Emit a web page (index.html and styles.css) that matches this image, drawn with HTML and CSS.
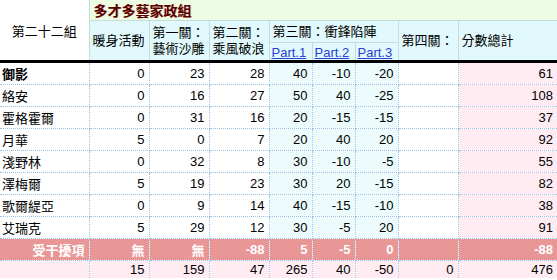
FILE: index.html
```html
<!DOCTYPE html>
<html>
<head>
<meta charset="utf-8">
<link rel="stylesheet" href="styles.css">
</head>
<body>
<table class="score">
  <colgroup>
    <col class="c-name"><col class="c-n"><col class="c-n"><col class="c-n">
    <col class="c-p"><col class="c-p"><col class="c-p"><col class="c-n"><col class="c-total">
  </colgroup>
  <thead>
    <tr class="h1">
      <th class="group" rowspan="3">第二十二組</th>
      <th class="team" colspan="8">多才多藝家政組</th>
    </tr>
    <tr class="h2">
      <th class="hc" rowspan="2">暖身活動</th>
      <th class="hc" rowspan="2">第一關：<br>藝術沙雕</th>
      <th class="hc" rowspan="2">第二關：<br>乘風破浪</th>
      <th class="hc" colspan="3">第三關：衝鋒陷陣</th>
      <th class="hc" rowspan="2">第四關：</th>
      <th class="hc" rowspan="2">分數總計</th>
    </tr>
    <tr class="h3">
      <th class="hc part"><a href="#">Part.1</a></th>
      <th class="hc part"><a href="#">Part.2</a></th>
      <th class="hc part"><a href="#">Part.3</a></th>
    </tr>
  </thead>
  <tbody>
    <tr><td class="name lead">御影</td><td>0</td><td>23</td><td>28</td><td class="cy">40</td><td class="cy">-10</td><td class="cy">-20</td><td></td><td class="pk">61</td></tr>
    <tr><td class="name">絡安</td><td>0</td><td>16</td><td>27</td><td class="cy">50</td><td class="cy">40</td><td class="cy">-25</td><td></td><td class="pk">108</td></tr>
    <tr><td class="name">霍格霍爾</td><td>0</td><td>31</td><td>16</td><td class="cy">20</td><td class="cy">-15</td><td class="cy">-15</td><td></td><td class="pk">37</td></tr>
    <tr><td class="name">月華</td><td>5</td><td>0</td><td>7</td><td class="cy">20</td><td class="cy">40</td><td class="cy">20</td><td></td><td class="pk">92</td></tr>
    <tr><td class="name">淺野林</td><td>0</td><td>32</td><td>8</td><td class="cy">30</td><td class="cy">-10</td><td class="cy">-5</td><td></td><td class="pk">55</td></tr>
    <tr><td class="name">澤梅爾</td><td>5</td><td>19</td><td>23</td><td class="cy">30</td><td class="cy">20</td><td class="cy">-15</td><td></td><td class="pk">82</td></tr>
    <tr><td class="name">歌爾緹亞</td><td>0</td><td>9</td><td>14</td><td class="cy">40</td><td class="cy">-15</td><td class="cy">-10</td><td></td><td class="pk">38</td></tr>
    <tr><td class="name">艾瑞克</td><td>5</td><td>29</td><td>12</td><td class="cy">30</td><td class="cy">-5</td><td class="cy">20</td><td></td><td class="pk">91</td></tr>
    <tr class="penalty"><td>受干擾項</td><td>無</td><td>無</td><td>-88</td><td>5</td><td>-5</td><td>0</td><td></td><td>-88</td></tr>
    <tr class="sum"><td></td><td>15</td><td>159</td><td>47</td><td>265</td><td>40</td><td>-50</td><td>0</td><td>476</td></tr>
  </tbody>
</table>
</body>
</html>
```

FILE: styles.css
```css
html, body {
  margin: 0;
  padding: 0;
  background: #ffffff;
}
.score {
  border-collapse: collapse;
  table-layout: fixed;
  width: 557px;
  font-family: "Liberation Sans", "Noto Sans CJK TC", sans-serif;
  font-size: 13px;
  color: #000;
}
.c-name { width: 89px; }
.c-n { width: 60px; }
.c-p { width: 43px; }
.c-total { width: 99px; }

.score th {
  font-weight: normal;
  text-align: left;
  padding: 0 0 0 3px;
  border: 1px solid #c4dcdc;
  white-space: nowrap;
  overflow: hidden;
}
.h1 th { height: 19px; }
.h2 th.hc { line-height: 16px; }
.h2 { height: 22px; }
.h3 { height: 19px; }
.score th.group {
  background: #ffffff;
  text-align: center;
  padding: 0;
  border-top: none;
  border-left: none;
}
.score th.team {
  background: #effce4;
  font-weight: bold;
  font-size: 14px;
  color: #5a0000;
  text-shadow: 1px 0 0 rgba(200, 0, 0, 0.25);
  padding-left: 4px;
  border-top: none;
  border-right: none;
}
.score th.hc {
  background: #e1f9fc;
  vertical-align: middle;
}
.score th.hc:last-child { border-right: none; }
.score th.part {
  padding: 0 0 0 2px;
  vertical-align: bottom;
}
.part a {
  color: #2a3fd4;
  text-decoration: underline;
  font-size: 13px;
}
thead tr:last-child th { border-bottom: 3px solid #000; }
.h2 th[rowspan="2"] { border-bottom: 3px solid #000; }
.score th.group { border-bottom: 3px solid #000; }

.score td {
  height: 21px;
  padding: 0 4px 0 2px;
  text-align: right;
  border: 1px dotted #9cc0e4;
  white-space: nowrap;
  overflow: hidden;
  font-family: "Liberation Sans", "Noto Sans CJK TC", sans-serif;
}
.score td:first-child { border-left: none; }
.score td:last-child { border-right: none; }
.score td.name {
  text-align: left;
  padding-left: 2px;
}
.score td.lead { font-weight: bold; }
.score td.cy { background: #ecfcfc; }
.score td.pk { background: #ffecf3; }

.penalty td {
  background: #e89696;
  color: #ffffff;
  font-weight: bold;
}
.sum td {
  background: #ffecf3;
  height: 17px;
  border-bottom: none;
}
```
